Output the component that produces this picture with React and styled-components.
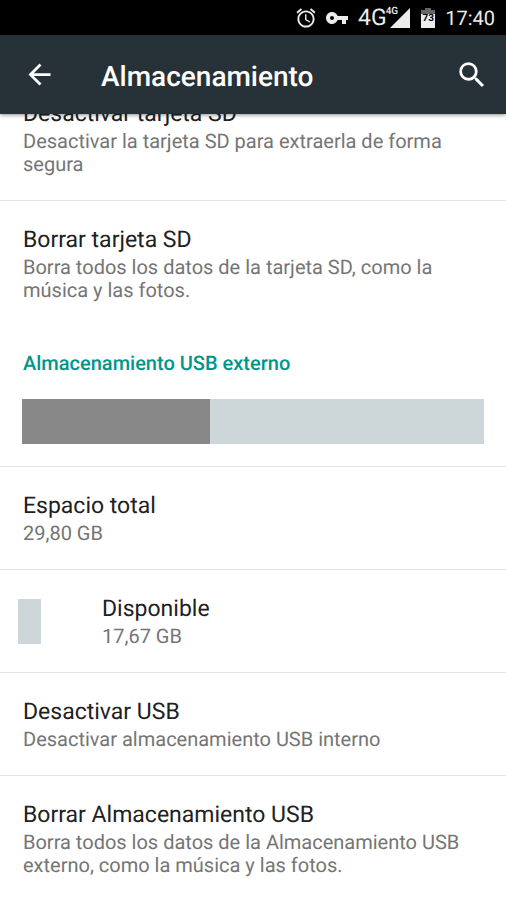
import React from 'react';
import styled, { createGlobalStyle } from 'styled-components';

const GlobalStyle = createGlobalStyle`
  *, *::before, *::after { box-sizing: border-box; }
  body {
    margin: 0;
    background: #fff;
    font-family: Roboto, "Noto Sans", sans-serif;
    text-rendering: geometricPrecision;
  }
`;

const Screen = styled.div`
  min-height: 100vh;
  overflow: hidden;
  background: #fff;
`;

const Top = styled.div`
  position: sticky;
  top: 0;
  z-index: 1;
`;

const StatusBar = styled.div`
  display: flex;
  align-items: center;
  justify-content: flex-end;
  height: 35px;
  padding-right: 11px;
  background: #000;
  color: #ececec;
  svg { display: block; fill: currentColor; }
`;

const AlarmIcon = styled.svg`
  margin-right: 10px;
`;

const KeyIcon = styled.svg`
  margin-right: 10px;
`;

const Network = styled.span`
  font-size: 23px;
  line-height: 36px;
`;

const NetworkSup = styled.span`
  align-self: flex-start;
  margin-top: 6px;
  margin-right: -8px;
  margin-left: -1px;
  font-size: 10px;
  font-weight: 500;
  line-height: 12px;
`;

const SignalIcon = styled.svg`
  margin-right: 11px;
`;

const Battery = styled.span`
  position: relative;
  display: block;
  margin-right: 10px;
`;

const BatteryLevel = styled.span`
  position: absolute;
  inset: 5px 0 auto;
  color: #000;
  font-size: 10px;
  font-weight: 700;
  line-height: 12px;
  text-align: center;
`;

const Clock = styled.time`
  font-size: 20px;
  line-height: 36px;
`;

const AppBar = styled.header`
  display: flex;
  align-items: center;
  height: 79px;
  padding: 0 17px 0 23px;
  background: #263238;
  color: #fff;
  box-shadow: 0 1px 4px rgba(0, 0, 0, 0.45);
`;

const IconButton = styled.button`
  display: flex;
  padding: 0;
  border: 0;
  background: none;
  color: inherit;
  cursor: pointer;
  svg { display: block; fill: currentColor; }
`;

const PageTitle = styled.h1`
  flex: 1;
  margin: 0 0 0 45px;
  padding-top: 4px;
  font-size: 28px;
  font-weight: 500;
  line-height: 32px;
`;

/* The list is scrolled so its first title sits partly beneath the app bar. */
const List = styled.main`
  margin-top: -39px;
`;

const Row = styled.section`
  display: flex;
  align-items: center;
  padding: 25px 23px 24px;
  border-bottom: ${({ $divided }) => ($divided ? '1px solid #e3e3e3' : '0')};
`;

const RowText = styled.div`
  flex: 1;
  max-width: 440px;
`;

const RowTitle = styled.h2`
  margin: 0 0 2px;
  color: #212121;
  font-size: 23px;
  font-weight: 400;
  line-height: 28px;
`;

const Summary = styled.p`
  margin: 0;
  color: #757575;
  font-size: 20px;
  line-height: 23px;
`;

const Swatch = styled.span`
  width: 23px;
  height: 45px;
  margin: 0 61px 0 -5px;
  background: #cdd6d9;
`;

const Category = styled.h2`
  margin: 0;
  padding: 26px 23px 24px;
  color: #009688;
  font-size: 20px;
  font-weight: 500;
  line-height: 23px;
`;

const UsageSection = styled.div`
  padding: 0 22px 22px;
  border-bottom: 1px solid #e3e3e3;
`;

const UsageBar = styled.div`
  height: 45px;
  background: #cdd6d9;
`;

const UsageFill = styled.div`
  height: 100%;
  background: #888;
`;

const TOTAL_GB = 29.8;
const FREE_GB = 17.67;

function Item({ title, summary, swatch, divided }) {
  return (
    <Row $divided={divided}>
      {swatch && <Swatch />}
      <RowText>
        <RowTitle>{title}</RowTitle>
        <Summary>{summary}</Summary>
      </RowText>
    </Row>
  );
}

export default function App() {
  const usedPercent = ((TOTAL_GB - FREE_GB) / TOTAL_GB) * 100;
  return (
    <Screen>
      <GlobalStyle />
      <Top>
        <StatusBar>
          <AlarmIcon width="20" height="20" viewBox="2 1.5 20 21" aria-hidden="true">
            <path d="M22 5.72l-4.6-3.86-1.29 1.53 4.6 3.86L22 5.72zM7.88 3.39L6.6 1.86 2 5.71l1.29 1.53 4.59-3.85zM12.5 8H11v6l4.75 2.85.75-1.23-4-2.37V8zM12 4c-4.97 0-9 4.03-9 9s4.02 9 9 9c4.97 0 9-4.03 9-9s-4.03-9-9-9zm0 16c-3.87 0-7-3.13-7-7s3.13-7 7-7 7 3.13 7 7-3.13 7-7 7z" />
          </AlarmIcon>
          <KeyIcon width="22" height="12" viewBox="1 6 22 12" aria-hidden="true">
            <path d="M12.65 10C11.83 7.67 9.61 6 7 6c-3.31 0-6 2.69-6 6s2.69 6 6 6c2.61 0 4.83-1.67 5.65-4H17v4h4v-4h2v-4H12.65zM7 14c-1.1 0-2-.9-2-2s.9-2 2-2 2 .9 2 2-.9 2-2 2z" />
          </KeyIcon>
          <Network>4G</Network>
          <NetworkSup>4G</NetworkSup>
          <SignalIcon width="20" height="20" viewBox="0 0 20 20" aria-hidden="true">
            <path d="M20 0v20H0z" />
          </SignalIcon>
          <Battery>
            <svg width="14" height="20" viewBox="0 0 14 20" aria-hidden="true">
              <path fill="#666" d="M4 0h6v2h4v4H0V2h4z" />
              <path d="M0 6h14v14H0z" />
            </svg>
            <BatteryLevel>73</BatteryLevel>
          </Battery>
          <Clock>17:40</Clock>
        </StatusBar>
        <AppBar>
          <IconButton type="button" aria-label="Atrás">
            <svg width="33" height="33" viewBox="0 0 24 24" aria-hidden="true">
              <path d="M20 11H7.83l5.59-5.59L12 4l-8 8 8 8 1.41-1.41L7.83 13H20v-2z" />
            </svg>
          </IconButton>
          <PageTitle>Almacenamiento</PageTitle>
          <IconButton type="button" aria-label="Buscar">
            <svg width="34" height="34" viewBox="0 0 24 24" aria-hidden="true">
              <path d="M15.5 14h-.79l-.28-.27A6.471 6.471 0 0 0 16 9.5 6.5 6.5 0 1 0 9.5 16c1.61 0 3.09-.59 4.23-1.57l.27.28v.79l5 4.99L20.49 19l-4.99-5zm-6 0C7.01 14 5 11.99 5 9.5S7.01 5 9.5 5 14 7.01 14 9.5 11.99 14 9.5 14z" />
            </svg>
          </IconButton>
        </AppBar>
      </Top>
      <List>
        <Item divided title="Desactivar tarjeta SD" summary="Desactivar la tarjeta SD para extraerla de forma segura" />
        <Item title="Borrar tarjeta SD" summary="Borra todos los datos de la tarjeta SD, como la música y las fotos." />
        <Category>Almacenamiento USB externo</Category>
        <UsageSection>
          <UsageBar role="img" aria-label="Espacio usado">
            <UsageFill style={{ width: `${usedPercent}%` }} />
          </UsageBar>
        </UsageSection>
        <Item divided title="Espacio total" summary="29,80 GB" />
        <Item divided swatch title="Disponible" summary="17,67 GB" />
        <Item divided title="Desactivar USB" summary="Desactivar almacenamiento USB interno" />
        <Item title="Borrar Almacenamiento USB" summary="Borra todos los datos de la Almacenamiento USB externo, como la música y las fotos." />
      </List>
    </Screen>
  );
}
